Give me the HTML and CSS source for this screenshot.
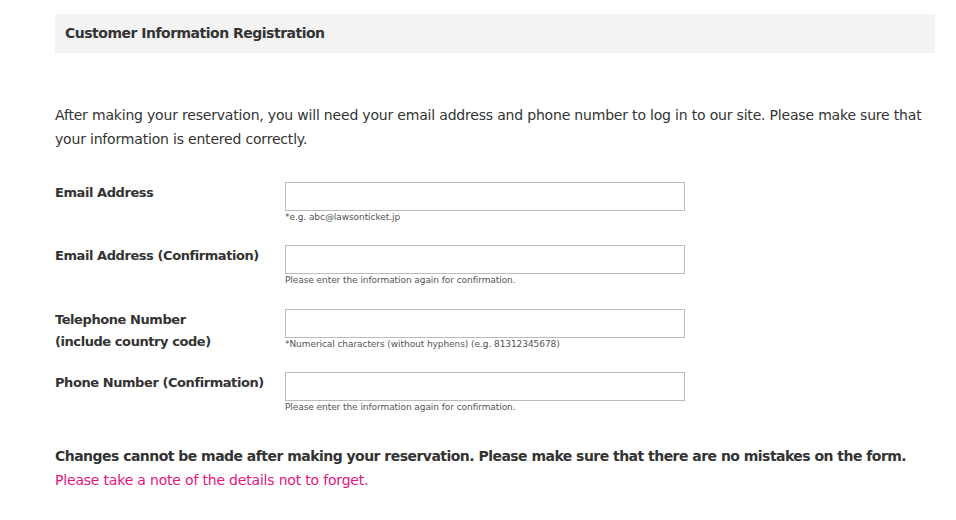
FILE: index.html
```html
<!DOCTYPE html>
<html>
<head>
<meta charset="utf-8">
<link rel="stylesheet" href="styles.css">
</head>
<body>
<div class="page">
  <h2 class="heading">Customer Information Registration</h2>
  <p class="intro">After making your reservation, you will need your email address and phone number to log in to our site. Please make sure that your information is entered correctly.</p>
  <div class="form">
    <div class="row">
      <div class="label">Email Address</div>
      <div class="field">
        <input class="input" type="text">
        <div class="hint">*e.g. abc@lawsonticket.jp</div>
      </div>
    </div>
    <div class="row">
      <div class="label">Email Address (Confirmation)</div>
      <div class="field">
        <input class="input" type="text">
        <div class="hint">Please enter the information again for confirmation.</div>
      </div>
    </div>
    <div class="row">
      <div class="label">Telephone Number<br>(include country code)</div>
      <div class="field">
        <input class="input" type="text">
        <div class="hint">*Numerical characters (without hyphens) (e.g. 81312345678)</div>
      </div>
    </div>
    <div class="row">
      <div class="label">Phone Number (Confirmation)</div>
      <div class="field">
        <input class="input" type="text">
        <div class="hint">Please enter the information again for confirmation.</div>
      </div>
    </div>
  </div>
  <p class="notice"><strong class="strong">Changes cannot be made after making your reservation. Please make sure that there are no mistakes on the form.</strong><br><span class="pink">Please take a note of the details not to forget.</span></p>
</div>
</body>
</html>
```

FILE: styles.css
```css
html, body {
  margin: 0;
  padding: 0;
  background: #fff;
}
body {
  font-family: "DejaVu Sans", Verdana, sans-serif;
  color: #333;
}
.page {
  width: 880px;
  margin: 0 0 0 55px;
  padding-top: 14px;
}
.heading {
  margin: 0;
  height: 39px;
  line-height: 39px;
  background: #f3f3f3;
  padding: 0 10px;
  font-size: 14px;
  font-weight: bold;
  letter-spacing: -0.5px;
  color: #333;
}
.intro {
  margin: 50px 0 0;
  font-size: 14px;
  line-height: 24px;
  letter-spacing: -0.19px;
}
.form {
  margin-top: 31px;
  display: flex;
  flex-direction: column;
}
.row {
  display: flex;
  height: 63.3px;
}
.label {
  width: 230px;
  font-size: 13px;
  font-weight: bold;
  line-height: 22px;
  letter-spacing: -0.43px;
}
.field {
  display: flex;
  flex-direction: column;
}
.input {
  box-sizing: border-box;
  width: 400px;
  height: 29px;
  margin: 0;
  border: 1px solid #bbb;
  padding: 2px 4px;
  background: #fff;
}
.hint {
  font-size: 9px;
  letter-spacing: -0.07px;
  color: #555;
  margin-top: 1px;
}
.notice {
  margin: 9px 0 0;
  font-size: 14px;
  line-height: 24px;
}
.strong {
  letter-spacing: -0.53px;
}
.pink {
  color: #e4147e;
  letter-spacing: -0.19px;
}
```
